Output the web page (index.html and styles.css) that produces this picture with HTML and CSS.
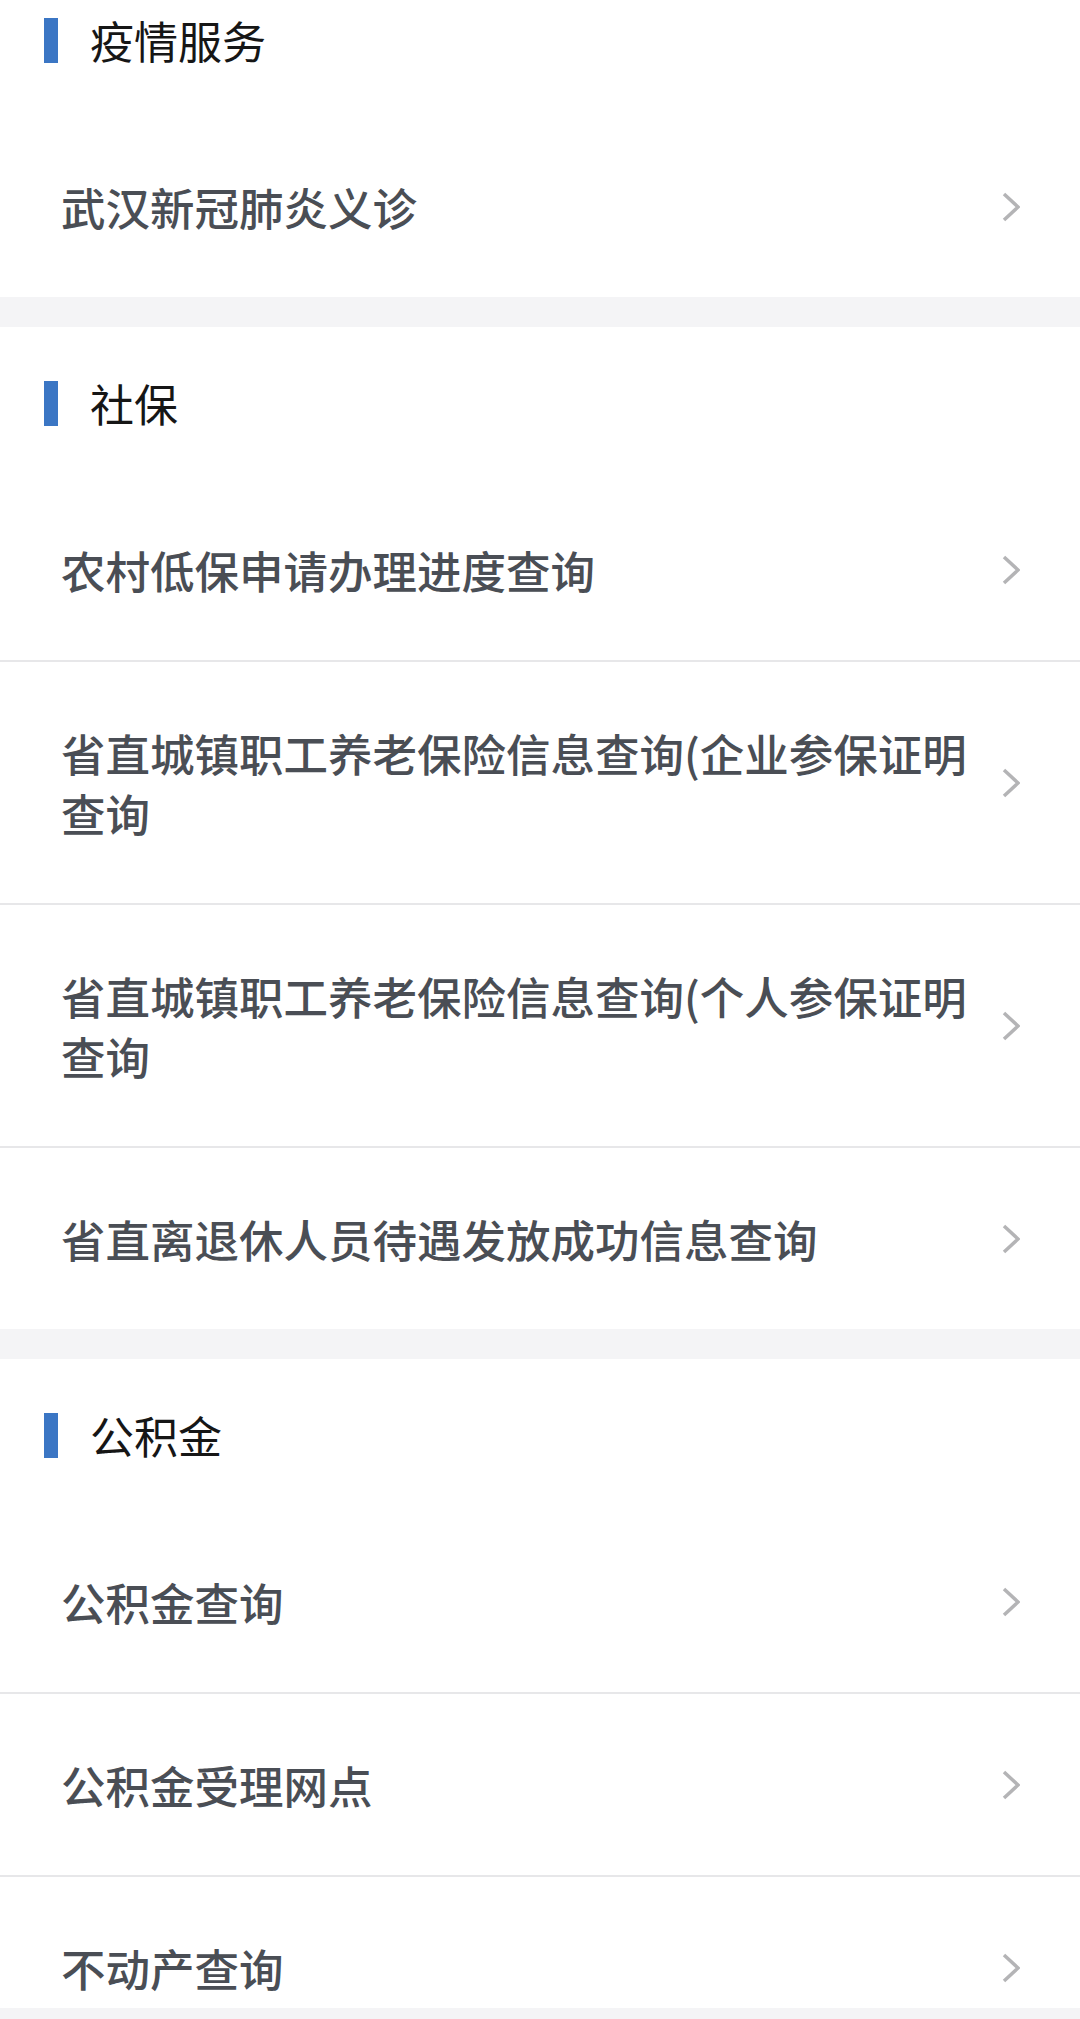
FILE: index.html
```html
<!DOCTYPE html>
<html lang="zh-CN">
  <head>
    <meta charset="UTF-8" />
    <meta name="viewport" content="width=device-width, initial-scale=1.0" />
    <title>便民服务</title>
    <link rel="stylesheet" href="styles.css">
  </head>
  <body>
    <div class="page">
      <section class="group">
        <div class="group-head">
          <span class="mark"></span>
          <h2>疫情服务</h2>
        </div>
        <ul class="list">
          <li class="row">
            <span class="row-text">武汉新冠肺炎义诊</span>
            <svg class="chev" viewBox="0 0 18 30"><polyline points="2,2 16,15 2,28" /></svg>
          </li>
        </ul>
      </section>

      <section class="group">
        <div class="group-head">
          <span class="mark"></span>
          <h2>社保</h2>
        </div>
        <ul class="list">
          <li class="row">
            <span class="row-text">农村低保申请办理进度查询</span>
            <svg class="chev" viewBox="0 0 18 30"><polyline points="2,2 16,15 2,28" /></svg>
          </li>
          <li class="row">
            <span class="row-text">省直城镇职工养老保险信息查询(企业参保证明查询</span>
            <svg class="chev" viewBox="0 0 18 30"><polyline points="2,2 16,15 2,28" /></svg>
          </li>
          <li class="row">
            <span class="row-text">省直城镇职工养老保险信息查询(个人参保证明查询</span>
            <svg class="chev" viewBox="0 0 18 30"><polyline points="2,2 16,15 2,28" /></svg>
          </li>
          <li class="row">
            <span class="row-text">省直离退休人员待遇发放成功信息查询</span>
            <svg class="chev" viewBox="0 0 18 30"><polyline points="2,2 16,15 2,28" /></svg>
          </li>
        </ul>
      </section>

      <section class="group">
        <div class="group-head">
          <span class="mark"></span>
          <h2>公积金</h2>
        </div>
        <ul class="list">
          <li class="row">
            <span class="row-text">公积金查询</span>
            <svg class="chev" viewBox="0 0 18 30"><polyline points="2,2 16,15 2,28" /></svg>
          </li>
          <li class="row">
            <span class="row-text">公积金受理网点</span>
            <svg class="chev" viewBox="0 0 18 30"><polyline points="2,2 16,15 2,28" /></svg>
          </li>
          <li class="row">
            <span class="row-text">不动产查询</span>
            <svg class="chev" viewBox="0 0 18 30"><polyline points="2,2 16,15 2,28" /></svg>
          </li>
        </ul>
      </section>
    </div>
    <div class="home-bar"></div>
  </body>
</html>
```

FILE: styles.css
```css
* {
  box-sizing: border-box;
  margin: 0;
  padding: 0;
}

body {
  font-family: "Noto Sans CJK SC", "Noto Sans", sans-serif;
  background: #f4f4f6;
  overflow: hidden;
}

/* page is scrolled a little, so the first header is cut */
.page {
  margin-top: -36px;
}

.group {
  background: #fff;
}

.group + .group {
  margin-top: 30px;
}

.group-head {
  height: 152px;
  display: flex;
  align-items: center;
  padding-left: 44px;
}

.mark {
  width: 14px;
  height: 45px;
  background: #3b76c4;
}

.group-head h2 {
  margin-left: 32px;
  font-size: 44px;
  font-weight: normal;
  color: #161616;
  line-height: 60px;
}

.list {
  list-style: none;
}

.row {
  display: flex;
  align-items: center;
  padding: 61px 60px 60px 61px;
}

.row + .row {
  border-top: 2px solid #e7e7e9;
}

.row-text {
  flex: 1;
  font-size: 44.5px;
  font-weight: 500;
  line-height: 60px;
  color: #4a4e55;
}

.chev {
  width: 18px;
  height: 30px;
  margin-left: 20px;
  flex-shrink: 0;
  fill: none;
  stroke: #b4b4b6;
  stroke-width: 3.5;
}

.home-bar {
  position: fixed;
  left: 0;
  right: 0;
  bottom: 0;
  height: 11px;
  background: #f4f4f6;
}
```
